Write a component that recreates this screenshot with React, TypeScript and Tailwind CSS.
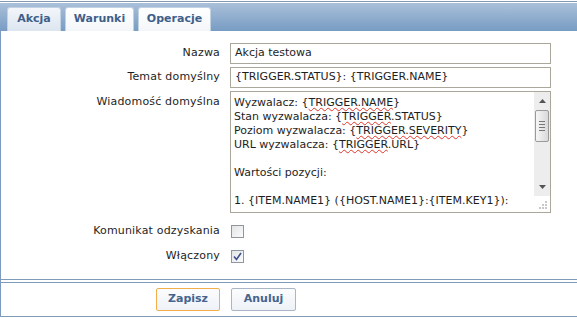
import React from "react";

const font = { fontFamily: '"DejaVu Sans", Verdana, sans-serif' };

function Tab({ label, active, w }: { label: string; active?: boolean; w: string }) {
  return (
    <div
      className={`${w} h-[24px] flex items-center justify-center rounded-t-[3px] border border-b-0 border-[#c3d2e3] text-[11px] font-bold text-[#3f5f8a] ${
        active ? "bg-gradient-to-b from-[#f3f6fa] to-[#dce5ef]" : "bg-gradient-to-b from-white to-[#f3f6f9]"
      }`}
    >
      {label}
    </div>
  );
}

function Wavy({ children }: { children: React.ReactNode }) {
  return <span className="underline decoration-wavy decoration-[#e0352b] decoration-1 underline-offset-1">{children}</span>;
}

function Checkbox({ checked }: { checked?: boolean }) {
  return (
    <div className="w-[13px] h-[13px] border border-[#8e979f] bg-gradient-to-br from-[#e2e4e6] to-[#fbfbfb] flex items-center justify-center">
      {checked && (
        <svg width="9" height="9" viewBox="0 0 9 9">
          <path d="M1 4.5 L3.5 7.5 L8 1" fill="none" stroke="#3b4f8f" strokeWidth="1.6" />
        </svg>
      )}
    </div>
  );
}

function Scrollbar() {
  return (
    <div className="w-[16px] h-full flex flex-col bg-[#ededed]">
      <div className="h-[18px] flex items-center justify-center">
        <svg width="7" height="4" viewBox="0 0 7 4"><path d="M0 4 L3.5 0 L7 4 Z" fill="#555" /></svg>
      </div>
      <div className="mx-[1px] h-[32px] rounded-[2px] border border-[#9a9a9a] bg-gradient-to-r from-[#f6f6f6] to-[#d9d9d9] flex flex-col items-center justify-center gap-[2px]">
        <div className="w-[6px] h-px bg-[#777]" />
        <div className="w-[6px] h-px bg-[#777]" />
        <div className="w-[6px] h-px bg-[#777]" />
        <div className="w-[6px] h-px bg-[#777]" />
      </div>
      <div className="flex-1" />
      <div className="h-[18px] flex items-center justify-center">
        <svg width="7" height="4" viewBox="0 0 7 4"><path d="M0 0 L7 0 L3.5 4 Z" fill="#555" /></svg>
      </div>
    </div>
  );
}

export default function App() {
  return (
    <div className="w-[577px] h-[318px] bg-white overflow-hidden text-[#1e1e1e]" style={font}>
      <div className="h-px" />
      <div className="h-px bg-[#8399b2]" />
      <div className="h-px" />
      <div className="h-[28px] bg-gradient-to-b from-[#aac0d9] to-[#779cc3] flex items-end pl-[7px] gap-[4px]">
        <Tab label="Akcja" active w="w-[54px]" />
        <Tab label="Warunki" w="w-[69px]" />
        <Tab label="Operacje" w="w-[73px]" />
      </div>
      <div className="h-[248px] border-l border-[#7d9bbe] flex flex-col text-[11px]">
        <div className="h-[12px]" />
        <div className="flex items-center h-[21px]">
          <div className="w-[219px] text-right tracking-[0.18px]">Nazwa</div>
          <div className="ml-[10px] w-[321px] h-[21px] border border-[#aaa89d] px-[4px] flex items-center">Akcja testowa</div>
        </div>
        <div className="h-[3px]" />
        <div className="flex items-center h-[21px]">
          <div className="w-[219px] text-right tracking-[0.18px]">Temat domyślny</div>
          <div className="ml-[10px] w-[321px] h-[21px] border border-[#aaa89d] px-[4px] flex items-center">
            {"{TRIGGER.STATUS}: {TRIGGER.NAME}"}
          </div>
        </div>
        <div className="h-[3px]" />
        <div className="flex items-start">
          <div className="w-[219px] text-right pt-[3px] tracking-[0.18px]">Wiadomość domyślna</div>
          <div className="ml-[10px] w-[321px] h-[122px] border border-[#aaa89d] flex relative">
            <div className="flex-1 pl-[3px] pt-[4px] leading-[14px] whitespace-pre overflow-hidden">
              <div>Wyzwalacz: {"{"}<Wavy>TRIGGER.NAME</Wavy>{"}"}</div>
              <div>Stan wyzwalacza: {"{"}<Wavy>TRIGGER</Wavy>.STATUS{"}"}</div>
              <div>Poziom wyzwalacza: {"{"}<Wavy>TRIGGER.SEVERITY</Wavy>{"}"}</div>
              <div>URL wyzwalacza: {"{"}<Wavy>TRIGGER</Wavy>.URL{"}"}</div>
              <div>&nbsp;</div>
              <div>Wartości pozycji:</div>
              <div>&nbsp;</div>
              <div>1. {"{ITEM.NAME1} ({HOST.NAME1}:{ITEM.KEY1}):"}</div>
            </div>
            <div className="flex flex-col">
              <div className="h-[104px]"><Scrollbar /></div>
              <div className="flex-1 flex items-end justify-end pr-[2px] pb-[2px]">
                <svg width="10" height="10" viewBox="0 0 10 10">
                  <rect x="7" y="1" width="2" height="2" fill="#c8c8c8" />
                  <rect x="4" y="4" width="2" height="2" fill="#c8c8c8" />
                  <rect x="7" y="4" width="2" height="2" fill="#c8c8c8" />
                  <rect x="1" y="7" width="2" height="2" fill="#c8c8c8" />
                  <rect x="4" y="7" width="2" height="2" fill="#c8c8c8" />
                  <rect x="7" y="7" width="2" height="2" fill="#c8c8c8" />
                </svg>
              </div>
            </div>
          </div>
        </div>
        <div className="h-[12px]" />
        <div className="flex items-center h-[13px]">
          <div className="w-[219px] text-right tracking-[0.18px]">Komunikat odzyskania</div>
          <div className="ml-[11px]"><Checkbox /></div>
        </div>
        <div className="h-[12px]" />
        <div className="flex items-center h-[13px]">
          <div className="w-[219px] text-right tracking-[0.18px]">Włączony</div>
          <div className="ml-[11px]"><Checkbox checked /></div>
        </div>
      </div>
      <div className="h-px bg-[#7f9bbb]" />
      <div className="h-[2px] border-l border-[#7d9bbe]" />
      <div className="h-px bg-[#7f9bbb]" />
      <div className="h-[33px] border-l border-[#7d9bbe] flex items-center">
        <div className="ml-[155px] w-[64px] h-[23px] rounded-[2px] border border-[#f3ae4c] bg-gradient-to-b from-[#fbfcfd] to-[#eef2f7] flex items-center justify-center text-[11px] font-bold text-[#45648e]">
          Zapisz
        </div>
        <div className="ml-[11px] w-[65px] h-[23px] rounded-[2px] border border-[#a8b6c8] bg-gradient-to-b from-[#fbfcfd] to-[#eef2f7] flex items-center justify-center text-[11px] font-bold text-[#45648e]">
          Anuluj
        </div>
      </div>
      <div className="h-px bg-[#7f9bbb]" />
    </div>
  );
}
